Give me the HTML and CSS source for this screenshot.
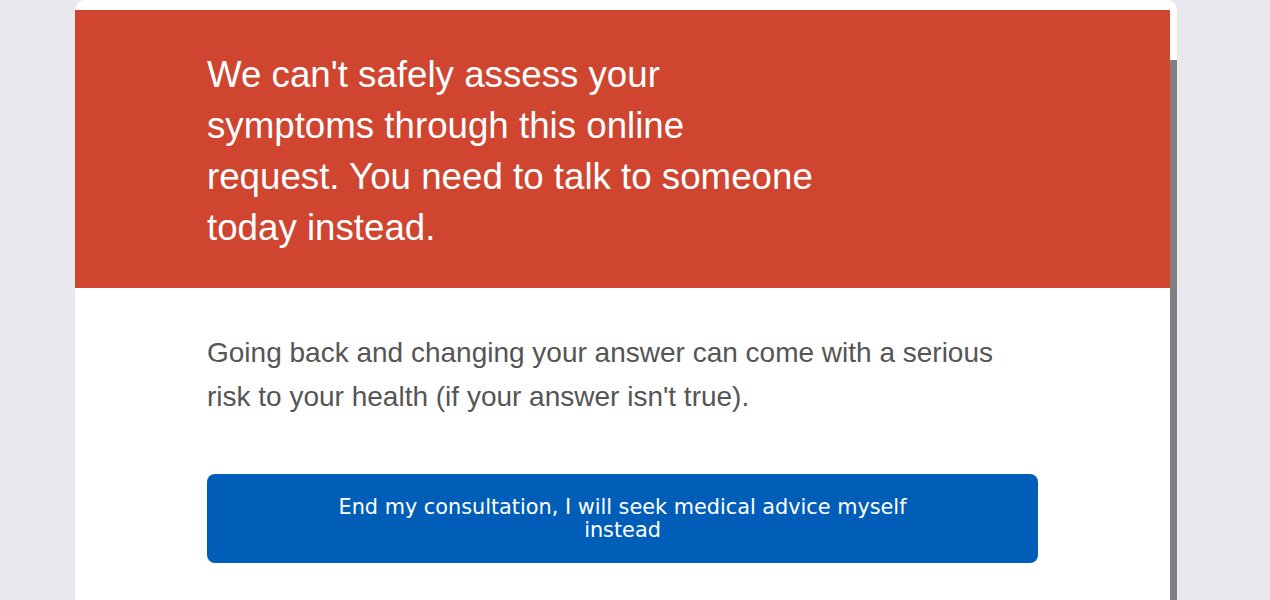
FILE: index.html
```html
<!DOCTYPE html>
<html lang="en">
<head>
  <meta charset="UTF-8">
  <meta name="viewport" content="width=device-width, initial-scale=1">
  <title>Consultation</title>
  <link rel="stylesheet" href="styles.css">
</head>
<body>
  <div class="modal">
    <div class="modal-body">
      <div class="alert">
        <h1>We can't safely assess your symptoms through this online request. You need to talk to someone today instead.</h1>
      </div>
      <div class="content">
        <p>Going back and changing your answer can come with a serious risk to your health (if your answer isn't true).</p>
        <button class="btn">End my consultation, I will seek medical advice myself instead</button>
      </div>
    </div>
    <div class="scrollbar">
      <div class="thumb"></div>
    </div>
  </div>
</body>
</html>
```

FILE: styles.css
```css
body {
  margin: 0;
  background-color: #e8e8ee;
  font-family: "Liberation Sans", Arial, sans-serif;
  height: 600px;
  overflow: hidden;
}

.modal {
  margin-left: 75px;
  width: 1102px;
  height: 640px;
  background-color: #fff;
  border-radius: 10px 10px 0 0;
  display: flex;
}

.modal-body {
  flex: 1;
  padding-top: 10px;
}

.alert {
  background-color: #cf4530;
  color: #fff;
  padding: 39px 132px 35px;
}

.alert h1 {
  margin: 0;
  max-width: 614px;
  font-weight: normal;
  font-size: 36.7px;
  line-height: 51px;
}

.content {
  padding: 43px 132px;
}

.content p {
  margin: 0 0 55px;
  max-width: 800px;
  color: #555;
  font-size: 28px;
  line-height: 44px;
}

.btn {
  display: block;
  width: 831px;
  padding: 21.5px 120px;
  border: none;
  border-radius: 8px;
  background-color: #005eb8;
  color: #fff;
  font-family: "DejaVu Sans", Verdana, sans-serif;
  font-size: 20.8px;
  line-height: 23px;
  cursor: pointer;
}

.scrollbar {
  width: 7px;
  padding-top: 60px;
}

.thumb {
  height: 600px;
  background-color: #808080;
}
```
